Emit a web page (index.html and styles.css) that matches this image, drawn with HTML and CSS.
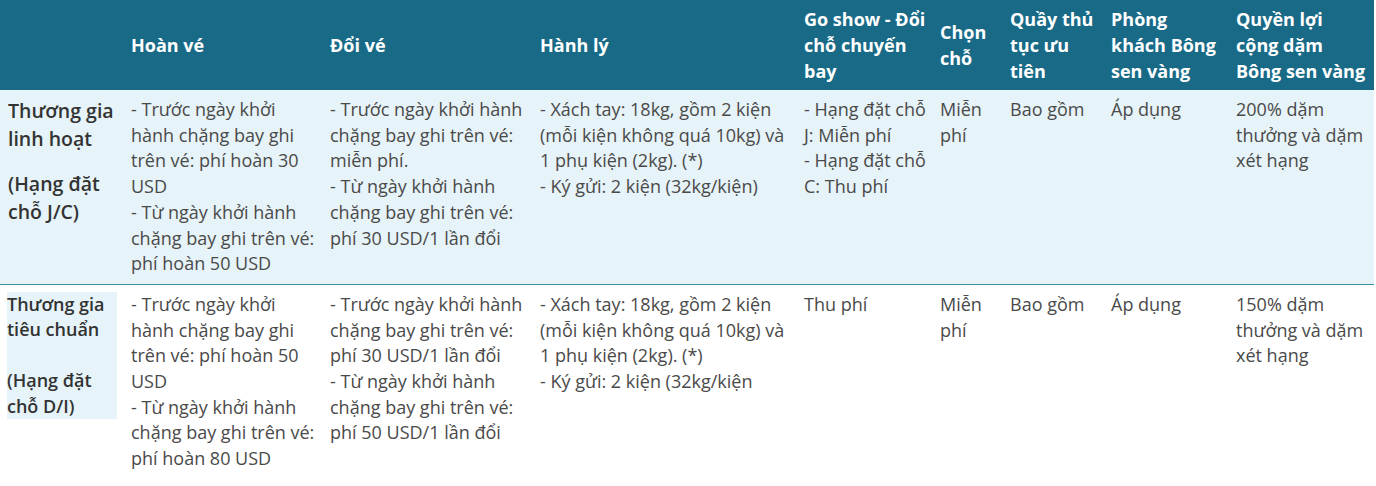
FILE: index.html
```html
<!DOCTYPE html>
<html lang="vi">
<head>
<meta charset="utf-8">
<title>Hạng Thương gia</title>
<link rel="stylesheet" href="styles.css">
</head>
<body>
<table class="fare-table">
  <colgroup>
    <col class="c-label">
    <col class="c-refund">
    <col class="c-change">
    <col class="c-bag">
    <col class="c-goshow">
    <col class="c-seat">
    <col class="c-counter">
    <col class="c-lounge">
    <col class="c-miles">
  </colgroup>
  <thead>
    <tr>
      <th></th>
      <th class="wide">Hoàn vé</th>
      <th>Đổi vé</th>
      <th>Hành lý</th>
      <th class="wide">Go show - Đổi chỗ chuyến bay</th>
      <th>Chọn chỗ</th>
      <th>Quầy thủ tục ưu tiên</th>
      <th>Phòng khách Bông sen vàng</th>
      <th>Quyền lợi cộng dặm Bông sen vàng</th>
    </tr>
  </thead>
  <tbody>
    <tr class="row-flex">
      <td class="label-big">
        <p class="lb">Thương gia linh hoạt</p>
        <p class="lb">(Hạng đặt chỗ J/C)</p>
      </td>
      <td class="wide">- Trước ngày khởi hành chặng bay ghi trên vé: phí hoàn 30 USD<br>- Từ ngày khởi hành chặng bay ghi trên vé: phí hoàn 50 USD</td>
      <td>- Trước ngày khởi hành chặng bay ghi trên vé: miễn phí.<br>- Từ ngày khởi hành chặng bay ghi trên vé: phí 30 USD/1 lần đổi</td>
      <td>- Xách tay: 18kg, gồm 2 kiện (mỗi kiện không quá 10kg) và 1 phụ kiện (2kg). (*)<br>- Ký gửi: 2 kiện (32kg/kiện)</td>
      <td class="wide">- Hạng đặt chỗ J: Miễn phí<br>- Hạng đặt chỗ C: Thu phí</td>
      <td>Miễn phí</td>
      <td>Bao gồm</td>
      <td>Áp dụng</td>
      <td>200% dặm thưởng và dặm xét hạng</td>
    </tr>
    <tr class="row-std">
      <td class="label-small">
        <div class="ls">Thương gia tiêu chuẩn<br><br>(Hạng đặt chỗ D/I)</div>
      </td>
      <td class="wide">- Trước ngày khởi hành chặng bay ghi trên vé: phí hoàn 50 USD<br>- Từ ngày khởi hành chặng bay ghi trên vé: phí hoàn 80 USD</td>
      <td>- Trước ngày khởi hành chặng bay ghi trên vé: phí 30 USD/1 lần đổi<br>- Từ ngày khởi hành chặng bay ghi trên vé: phí 50 USD/1 lần đổi</td>
      <td>- Xách tay: 18kg, gồm 2 kiện (mỗi kiện không quá 10kg) và 1 phụ kiện (2kg). (*)<br>- Ký gửi: 2 kiện (32kg/kiện</td>
      <td class="wide">Thu phí</td>
      <td>Miễn phí</td>
      <td>Bao gồm</td>
      <td>Áp dụng</td>
      <td>150% dặm thưởng và dặm xét hạng</td>
    </tr>
  </tbody>
</table>
</body>
</html>
```
FILE: styles.css
```css
html, body {
  margin: 0;
  padding: 0;
  background: #ffffff;
}

body {
  font-family: "Open Sans", "Liberation Sans", sans-serif;
  font-size: 18px;
  color: #4a4a4a;
}

.fare-table {
  width: 1374px;
  table-layout: fixed;
  border-collapse: collapse;
  border-spacing: 0;
}

.c-label { width: 123px; }
.c-refund { width: 199px; }
.c-change { width: 210px; }
.c-bag { width: 264px; }
.c-goshow { width: 136px; }
.c-seat { width: 70px; }
.c-counter { width: 101px; }
.c-lounge { width: 125px; }
.c-miles { width: 146px; }

.fare-table th {
  background: #186a87;
  color: #ffffff;
  font-weight: 700;
  font-size: 18px;
  line-height: 26px;
  text-align: left;
  vertical-align: middle;
  padding: 6px 8px;
  height: 78px;
  box-sizing: content-box;
}

.fare-table td {
  vertical-align: top;
  text-align: left;
  line-height: 25.7px;
  padding: 7px 8px 7px 8px;
}

.fare-table .wide {
  padding-right: 2px;
}

.row-flex td {
  background: #e6f3f8;
  border-bottom: 1px solid #3a8ca3;
}

.label-big {
  padding-right: 4px !important;
}

.label-big .lb {
  margin: 0 0 17px 0;
  font-size: 19.5px;
  line-height: 28px;
  font-weight: 600;
  color: #333333;
}

.label-big .lb:last-child {
  margin-bottom: 0;
}

.label-small {
  padding-left: 7px !important;
  padding-right: 0 !important;
}

.ls {
  width: 110px;
  background: #e6f3f8;
  font-weight: 600;
  color: #333333;
  line-height: 25.5px;
}
```
